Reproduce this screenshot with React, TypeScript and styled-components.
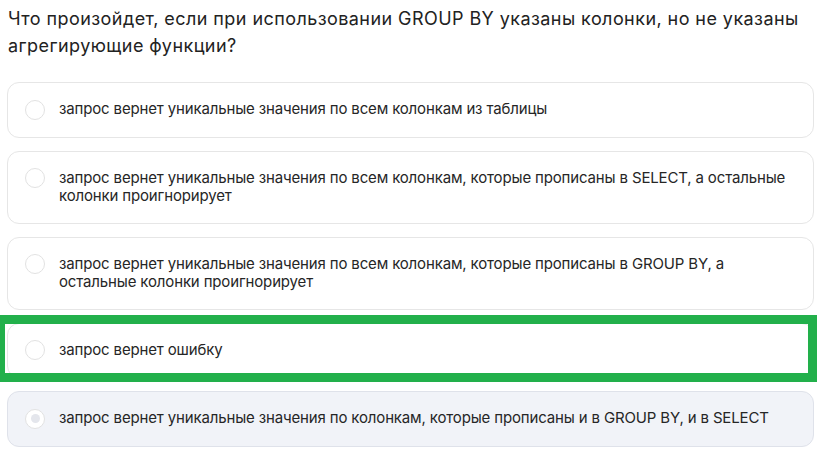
import React from "react";
import styled, { createGlobalStyle } from "styled-components";

const Global = createGlobalStyle`
  html, body { margin: 0; padding: 0; background: #ffffff; }
  body { font-family: Inter, "Noto Sans", "Liberation Sans", sans-serif; color: #262626; }
  * { box-sizing: border-box; }
`;

const Page = styled.div`
  width: 824px;
  height: 456px;
  overflow: hidden;
  padding: 5px 10px 0 7px;
  display: flex;
  flex-direction: column;
`;

const Question = styled.div`
  font-size: 18px;
  letter-spacing: 0.43px;
  line-height: 27px;
  color: #222222;
  padding-left: 1px;
  margin-bottom: 23px;
`;

const Options = styled.div`
  display: flex;
  flex-direction: column;
  gap: 13px;
`;

const Card = styled.div<{ $selected?: boolean }>`
  position: relative;
  display: flex;
  align-items: flex-start;
  gap: 14px;
  padding: 17px;
  border: 1px solid ${(p) => (p.$selected ? "#dfe2ea" : "#e6e6e6")};
  border-radius: 12px;
  background: ${(p) => (p.$selected ? "#f1f3f8" : "#ffffff")};
`;

const Radio = styled.span<{ $selected?: boolean }>`
  flex: 0 0 auto;
  width: 20px;
  height: 20px;
  margin-top: -0.5px;
  border-radius: 50%;
  border: 1px solid #e2e2e2;
  background: #ffffff;
  display: flex;
  align-items: center;
  justify-content: center;
  &::after {
    content: "";
    display: ${(p) => (p.$selected ? "block" : "none")};
    width: 9px;
    height: 9px;
    border-radius: 50%;
    background: #e4e6ec;
  }
`;

const Label = styled.span`
  font-size: 15px;
  letter-spacing: -0.15px;
  line-height: 18.5px;
  color: #262626;
`;

const Highlight = styled.div`
  position: absolute;
  top: -9px;
  left: -12px;
  right: -4px;
  bottom: -5px;
  border: 9px solid #22b04b;
  pointer-events: none;
`;

const options: { text: string; highlight?: boolean; selected?: boolean }[] = [
  { text: "запрос вернет уникальные значения по всем колонкам из таблицы" },
  {
    text: "запрос вернет уникальные значения по всем колонкам, которые прописаны в SELECT, а остальные колонки проигнорирует",
  },
  {
    text: "запрос вернет уникальные значения по всем колонкам, которые прописаны в GROUP BY, а остальные колонки проигнорирует",
  },
  { text: "запрос вернет ошибку", highlight: true },
  {
    text: "запрос вернет уникальные значения по колонкам, которые прописаны и в GROUP BY, и в SELECT",
    selected: true,
  },
];

export default function App() {
  return (
    <>
      <Global />
      <Page>
        <Question>
          Что произойдет, если при использовании GROUP BY указаны колонки, но не указаны агрегирующие функции?
        </Question>
        <Options>
          {options.map((o, i) => (
            <Card key={i} $selected={o.selected}>
              <Radio $selected={o.selected} />
              <Label>{o.text}</Label>
              {o.highlight && <Highlight />}
            </Card>
          ))}
        </Options>
      </Page>
    </>
  );
}
